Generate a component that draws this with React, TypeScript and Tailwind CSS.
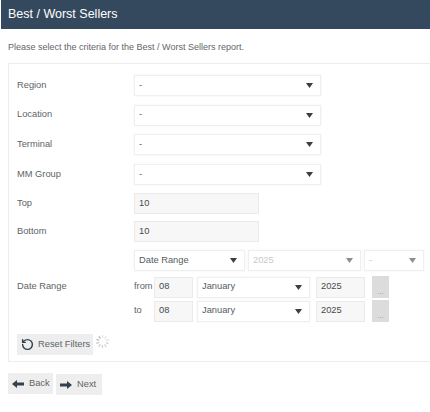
import { RotateCcw } from "lucide-react";

const font = { fontFamily: '"Liberation Sans", Arial, sans-serif' };

const Caret = ({ muted = false }: { muted?: boolean }) => (
  <svg width="7" height="5" viewBox="0 0 7 5" className="shrink-0">
    <path d="M0 0h7L3.5 5z" fill={muted ? "#8a8f94" : "#3a3f44"} />
  </svg>
);

const SelectBox = ({
  value,
  className,
  muted = false,
}: {
  value: string;
  className: string;
  muted?: boolean;
}) => (
  <div
    className={`flex h-[21px] items-center justify-between border border-[#efefef] bg-white pl-[4px] pr-[7px] text-[9.3px] shadow-[0_0_2px_rgba(0,0,0,0.06)] ${
      muted ? "text-[#c9c9c9]" : "text-[#555b60]"
    } ${className}`}
  >
    <span>{value}</span>
    <Caret muted={muted} />
  </div>
);

const FieldRow = ({
  label,
  labelClass = "",
  children,
}: {
  label: string;
  labelClass?: string;
  children: React.ReactNode;
}) => (
  <div className="flex items-center">
    <div className={`w-[117px] text-[9.3px] text-[#5d6469] ${labelClass}`}>{label}</div>
    {children}
  </div>
);

const TextBox = ({ value, className }: { value: string; className: string }) => (
  <div
    className={`flex h-[21px] items-center border border-[#eaeaea] bg-[#f7f7f7] pl-[4px] text-[9.3px] text-[#454a4f] ${className}`}
  >
    {value}
  </div>
);

const DateRow = ({ prefix }: { prefix: string }) => (
  <div className="flex items-center">
    <div className="w-[20px] text-[9.3px] text-[#5d6469]">{prefix}</div>
    <TextBox value="08" className="w-[39px]" />
    <SelectBox value="January" className="ml-[4px] w-[113px]" />
    <TextBox value="2025" className="ml-[6px] w-[49px]" />
    <div className="ml-[7px] flex h-[22px] w-[17px] items-end justify-center bg-[#dcdcdc] pb-[2px] text-[8px] leading-none text-[#9a9a9a]">
      ...
    </div>
  </div>
);

const Spinner = () => (
  <svg width="13" height="13" viewBox="0 0 13 13" className="ml-[3px] mt-[-6px]">
    {Array.from({ length: 10 }).map((_, i) => (
      <rect
        key={i}
        x="6"
        y="0"
        width="1.2"
        height="3"
        fill="#b5b5b5"
        opacity={0.35 + i * 0.065}
        transform={`rotate(${i * 36} 6.5 6.5)`}
      />
    ))}
  </svg>
);

const ArrowIcon = ({ flip = false }: { flip?: boolean }) => (
  <svg width="12" height="8" viewBox="0 0 12 8" className={flip ? "-scale-x-100" : ""}>
    <path d="M0 2.5h7V0l5 4-5 4V5.5H0z" fill="#33414f" />
  </svg>
);

export default function App() {
  return (
    <div className="h-[412px] w-[430px] overflow-hidden bg-white" style={font}>
      <div className="ml-[1px] flex h-[29px] items-center bg-[#34495e] pl-[7px] text-[12.5px] text-white">
        Best / Worst Sellers
      </div>

      <div className="pl-[8px]">
        <p className="mt-[11px] text-[9px] leading-[14px] text-[#5f666b]">
          Please select the criteria for the Best / Worst Sellers report.
        </p>

        <div className="mt-[9px] w-[440px] border border-[#ececec] pb-[6px] pl-[8px] pt-[11px]">
          <div className="flex flex-col gap-[8.7px]">
            {["Region", "Location", "Terminal", "MM Group"].map((label) => (
              <FieldRow key={label} label={label}>
                <SelectBox value="-" className="w-[187px]" />
              </FieldRow>
            ))}
          </div>

          <div className="mt-[8px] flex flex-col gap-[7px]">
            <FieldRow label="Top">
              <TextBox value="10" className="w-[125px]" />
            </FieldRow>
            <FieldRow label="Bottom">
              <TextBox value="10" className="w-[125px]" />
            </FieldRow>
          </div>

          <div className="mt-[8px]">
            <FieldRow label="Date Range" labelClass="pt-[2px]">
              <div className="flex flex-col">
                <div className="flex gap-[3px]">
                  <SelectBox value="Date Range" className="w-[111px]" />
                  <SelectBox value="2025" className="w-[113px]" muted />
                  <SelectBox value="-" className="w-[60px]" muted />
                </div>
                <div className="mt-[5px] flex flex-col gap-[2px]">
                  <DateRow prefix="from" />
                  <DateRow prefix="to" />
                </div>
              </div>
            </FieldRow>
          </div>

          <div className="mt-[12px] flex items-center">
            <div className="flex h-[21px] w-[76px] items-center gap-[4px] whitespace-nowrap bg-[#eeeeee] pl-[4px] text-[9.3px] text-[#5d6469]">
              <RotateCcw size={13} strokeWidth={2.6} color="#33414f" />
              <span>Reset Filters</span>
            </div>
            <Spinner />
          </div>
        </div>

        <div className="mt-[11px] flex items-start gap-[3px]">
          <div className="flex h-[21px] w-[45px] items-center gap-[5px] bg-[#eeeeee] pl-[4px] text-[9.3px] text-[#5d6469]">
            <ArrowIcon flip />
            <span>Back</span>
          </div>
          <div className="mt-[1px] flex h-[21px] w-[46px] items-center gap-[5px] bg-[#eeeeee] pl-[4px] text-[9.3px] text-[#5d6469]">
            <ArrowIcon />
            <span>Next</span>
          </div>
        </div>
      </div>
    </div>
  );
}
